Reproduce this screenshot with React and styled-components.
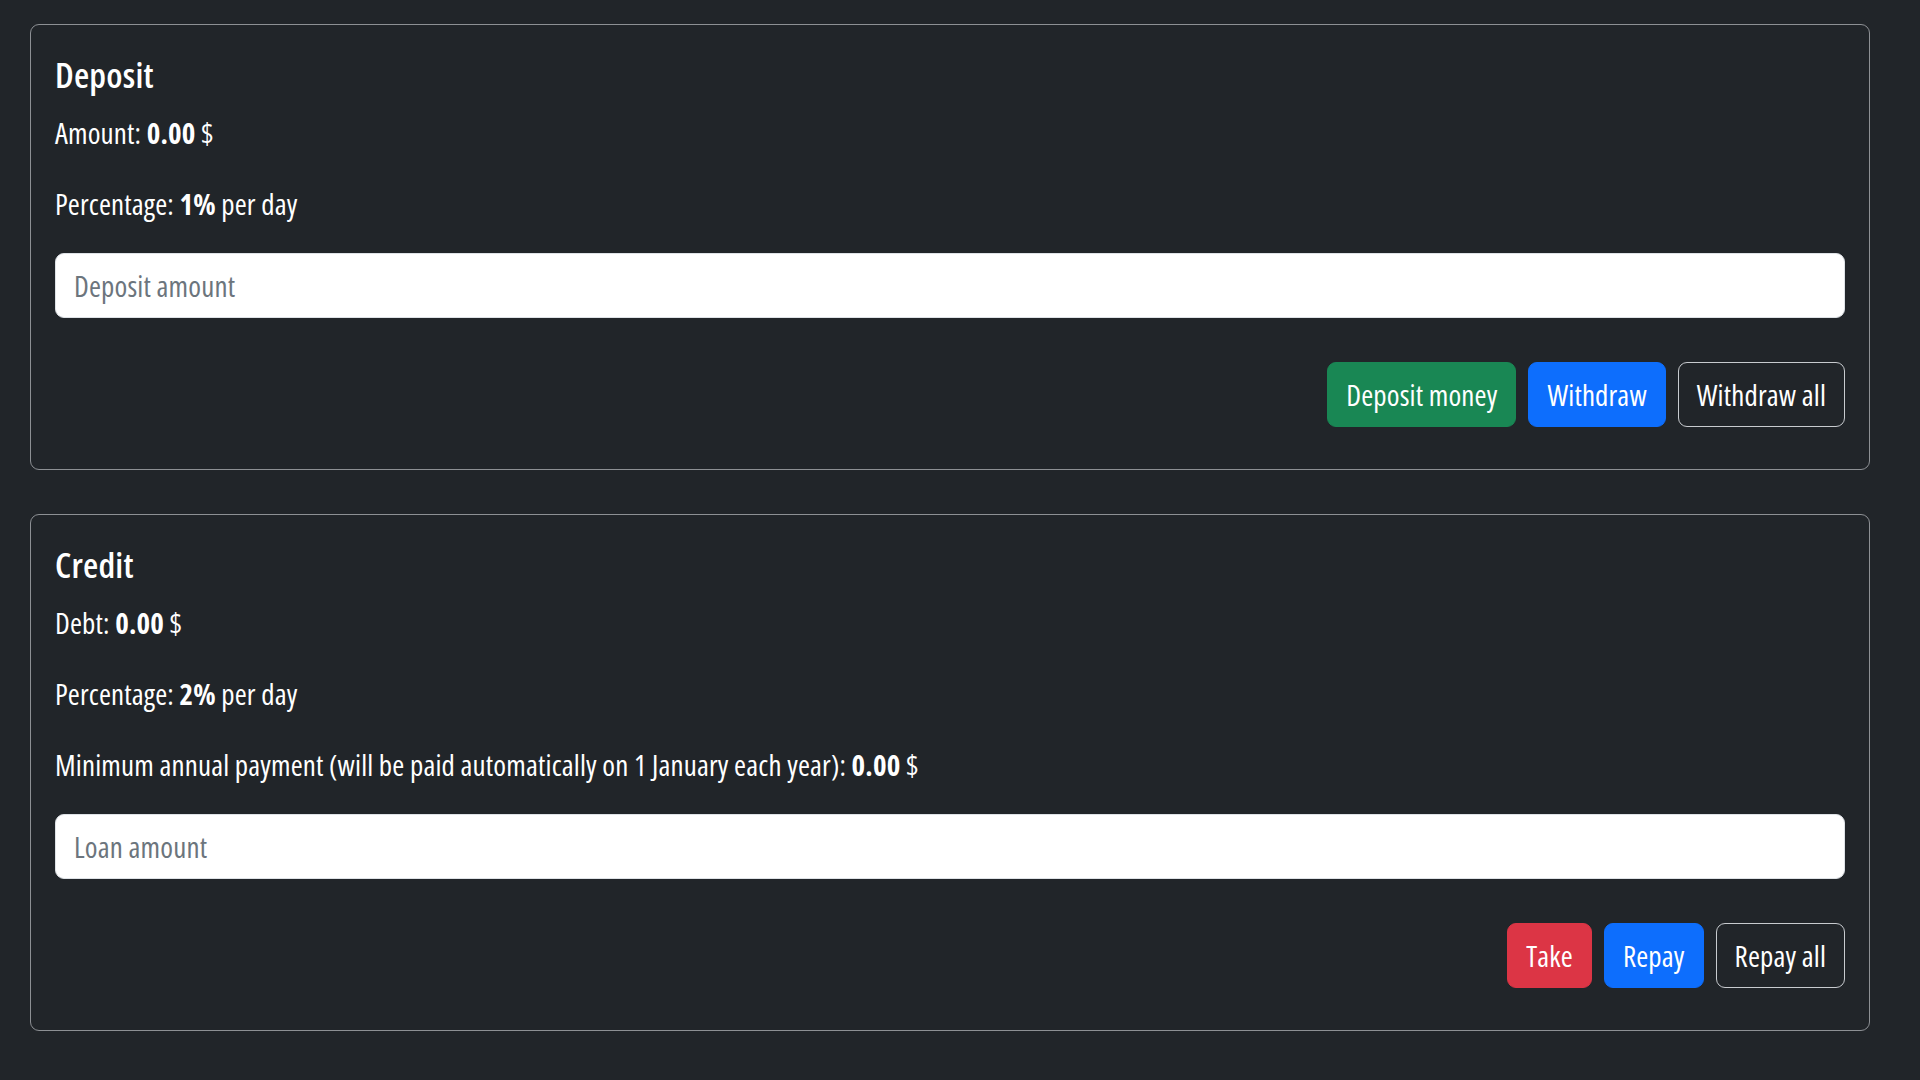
import React from "react";
import styled, { createGlobalStyle } from "styled-components";

const GlobalStyle = createGlobalStyle`
  body {
    margin: 0;
    background-color: #212529;
    color: #fff;
    font-family: "Open Sans", "Liberation Sans", sans-serif;
    font-stretch: 75%;
    font-size: 29px;
    letter-spacing: 0.15px;
  }
`;

const Page = styled.div`
  display: flex;
  flex-direction: column;
  gap: 44px;
  padding: 24px 50px 24px 30px;
`;

const Card = styled.section`
  border: 1px solid #8d9094;
  border-radius: 9px;
  padding: 29px 24px 42px;
`;

const Title = styled.h5`
  margin: 0 0 15px;
  font-size: 35px;
  line-height: 42px;
  font-weight: 600;
  letter-spacing: 0.2px;
`;

const Line = styled.p`
  margin: 0 0 28px;
  line-height: 43px;

  b {
    font-weight: 700;
  }
`;

const Field = styled.input`
  display: block;
  box-sizing: border-box;
  width: 100%;
  height: 65px;
  padding: 0 18px;
  border: 1px solid #dee2e6;
  border-radius: 9px;
  background: #fff;
  color: #212529;
  font: inherit;
  font-stretch: 75%;
  letter-spacing: 0.15px;
  outline: none;

  &::placeholder {
    color: #6c757d;
  }
`;

const Actions = styled.div`
  display: flex;
  justify-content: flex-end;
  gap: 12px;
  margin-top: 44px;
`;

const tones = {
  success: { bg: "#198754", border: "#198754" },
  primary: { bg: "#0d6efd", border: "#0d6efd" },
  danger: { bg: "#dc3545", border: "#dc3545" },
  outline: { bg: "transparent", border: "#c8cbcf" },
};

const Button = styled.button`
  height: 65px;
  padding: 0 18px;
  border: 1px solid ${(p) => tones[p.$tone].border};
  border-radius: 9px;
  background: ${(p) => tones[p.$tone].bg};
  color: #fff;
  font: inherit;
  font-stretch: 75%;
  letter-spacing: 0.15px;
  cursor: pointer;
`;

export default function App() {
  return (
    <>
      <GlobalStyle />
      <Page>
        <Card>
          <Title>Deposit</Title>
          <Line>Amount: <b>0.00</b> $</Line>
          <Line>Percentage: <b>1%</b> per day</Line>
          <Field placeholder="Deposit amount" />
          <Actions>
            <Button $tone="success">Deposit money</Button>
            <Button $tone="primary">Withdraw</Button>
            <Button $tone="outline">Withdraw all</Button>
          </Actions>
        </Card>
        <Card>
          <Title>Credit</Title>
          <Line>Debt: <b>0.00</b> $</Line>
          <Line>Percentage: <b>2%</b> per day</Line>
          <Line>
            Minimum annual payment (will be paid automatically on 1 January each year): <b>0.00</b> $
          </Line>
          <Field placeholder="Loan amount" />
          <Actions>
            <Button $tone="danger">Take</Button>
            <Button $tone="primary">Repay</Button>
            <Button $tone="outline">Repay all</Button>
          </Actions>
        </Card>
      </Page>
    </>
  );
}
